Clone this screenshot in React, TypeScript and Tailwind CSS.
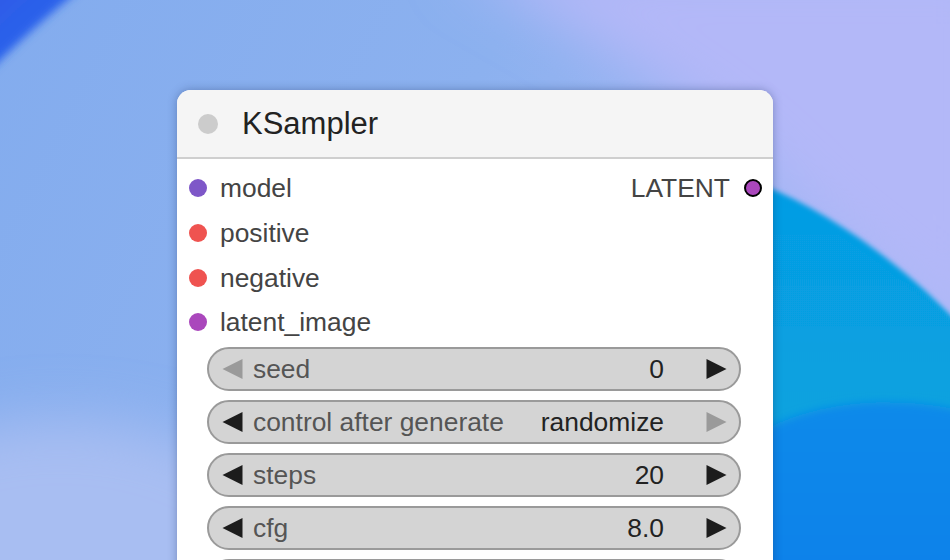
import React from "react";

type Slot = { label: string; color: string };

const inputs: Slot[] = [
    { label: "model", color: "bg-[#7e57c8]" },
    { label: "positive", color: "bg-[#ef5350]" },
    { label: "negative", color: "bg-[#ef5350]" },
    { label: "latent_image", color: "bg-[#aa47bc]" },
];

const widgets = [
    { label: "seed", value: "0", leftOff: true, rightOff: false },
    { label: "control after generate", value: "randomize", leftOff: false, rightOff: true },
    { label: "steps", value: "20", leftOff: false, rightOff: false },
    { label: "cfg", value: "8.0", leftOff: false, rightOff: false },
];

function Arrow({ dir, off }: { dir: "left" | "right"; off: boolean }) {
    const points = dir === "left" ? "20,0 20,20 0,10" : "0,0 0,20 20,10";
    return (
        <svg width="21" height="20" viewBox="0 0 20 20" className="shrink-0">
            <polygon points={points} fill={off ? "#9a9a9a" : "#1c1c1c"} />
        </svg>
    );
}

function Background() {
    return (
        <svg className="absolute inset-0" width="950" height="560" viewBox="0 0 950 560">
            <defs>
                <linearGradient id="base" x1="0" y1="0" x2="1" y2="0.3">
                    <stop offset="0" stopColor="#83acee" />
                    <stop offset="0.5" stopColor="#8cb1ef" />
                    <stop offset="1" stopColor="#a9b8f6" />
                </linearGradient>
                <linearGradient id="corner" x1="0" y1="0" x2="1" y2="1">
                    <stop offset="0" stopColor="#3457e6" />
                    <stop offset="1" stopColor="#1c6ff0" />
                </linearGradient>
                <linearGradient id="cyan" x1="0" y1="0" x2="0" y2="1">
                    <stop offset="0" stopColor="#069ce4" />
                    <stop offset="1" stopColor="#08a6dc" />
                </linearGradient>
                <linearGradient id="deep" x1="0" y1="0" x2="0" y2="1">
                    <stop offset="0" stopColor="#0a8aea" />
                    <stop offset="1" stopColor="#0782ea" />
                </linearGradient>
                <filter id="soft" filterUnits="userSpaceOnUse" x="-100" y="-100" width="1150" height="760">
                    <feGaussianBlur stdDeviation="28" />
                </filter>
                <filter id="edge" filterUnits="userSpaceOnUse" x="-100" y="-100" width="1150" height="760">
                    <feGaussianBlur stdDeviation="4" />
                </filter>
                <filter id="edge2" filterUnits="userSpaceOnUse" x="-100" y="-100" width="1150" height="760">
                    <feGaussianBlur stdDeviation="2.5" />
                </filter>
            </defs>
            <rect width="950" height="560" fill="url(#base)" />
            <ellipse cx="60" cy="600" rx="260" ry="180" fill="#a8bef2" filter="url(#soft)" />
            <path d="M450,-40 C590,40 720,110 800,200 L1000,360 L1000,-40 Z" fill="#b3b8f8" filter="url(#soft)" />
            <path d="M-20,-20 L92,-20 Q40,20 -20,80 Z" fill="url(#corner)" filter="url(#edge)" />
            <path d="M760,184 C830,212 900,262 960,325 L960,570 L760,570 Z" fill="url(#cyan)" filter="url(#edge2)" />
            <path d="M760,432 C820,400 890,396 960,410 L960,570 L760,570 Z" fill="url(#deep)" filter="url(#edge)" />
        </svg>
    );
}

export default function App() {
    return (
        <div
            className="relative w-[950px] h-[560px] overflow-hidden"
            style={{ fontFamily: '"Liberation Sans", Arial, sans-serif' }}
        >
            <Background />
            <div className="relative pl-[177px] pt-[90px]">
                <div className="w-[596px] h-[480px] bg-white rounded-t-[14px] shadow-[0_0_10px_rgba(20,40,90,0.35)] overflow-hidden">
                    <div className="h-[69px] bg-[#f5f5f5] border-b-2 border-[#cfcfcf] flex items-center pl-[21px]">
                        <span className="w-5 h-5 rounded-full bg-[#cccccc]" />
                        <span className="ml-6 text-[31px] text-[#222] leading-none">KSampler</span>
                    </div>

                    <div className="pt-[7px]">
                        {inputs.map((s, i) => (
                            <div key={s.label} className="h-[44.7px] flex items-center pl-[12px] pr-[11px]">
                                <span className={`w-[18px] h-[18px] rounded-full ${s.color}`} />
                                <span className="ml-[13px] text-[26.4px] text-[#444] leading-none">{s.label}</span>
                                {i === 0 && (
                                    <div className="ml-auto flex items-center">
                                        <span className="text-[26.4px] text-[#444] leading-none">LATENT</span>
                                        <span className="ml-[14px] w-[18px] h-[18px] rounded-full bg-[#aa47bc] border-2 border-black" />
                                    </div>
                                )}
                            </div>
                        ))}
                    </div>

                    <div className="flex flex-col gap-[9px] pl-[30px] pr-[32px] mt-[2px]">
                        {widgets.map((w) => (
                            <div
                                key={w.label}
                                className="h-[44px] rounded-full bg-[#d4d4d4] border-2 border-[#9a9a9a] flex items-center pl-[13px] pr-[12px]"
                            >
                                <Arrow dir="left" off={w.leftOff} />
                                <span className="ml-[10px] text-[26.4px] text-[#555] leading-none">{w.label}</span>
                                <span className="ml-auto text-[26.4px] text-[#222] leading-none">{w.value}</span>
                                <span className="ml-[42px]">
                                    <Arrow dir="right" off={w.rightOff} />
                                </span>
                            </div>
                        ))}
                        {/* next widget, only its top edge is in view */}
                        <div className="h-[44px] rounded-full bg-[#d4d4d4] border-2 border-[#9a9a9a]" />
                    </div>
                </div>
            </div>
        </div>
    );
}
